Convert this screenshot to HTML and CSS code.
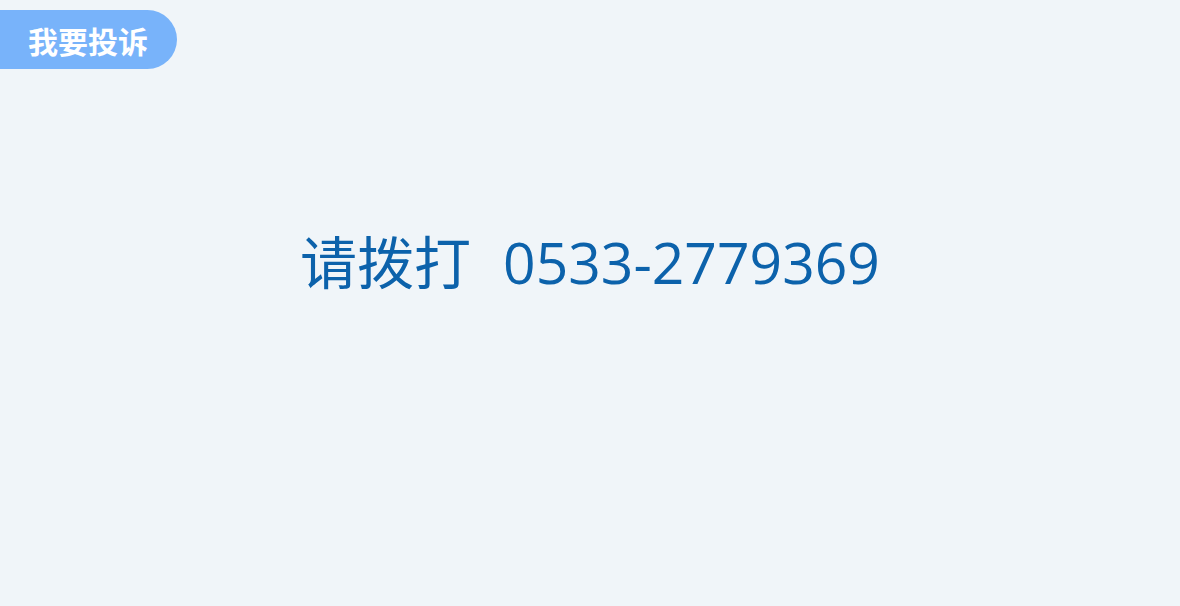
FILE: index.html
```html
<!DOCTYPE html>
<html lang="zh-CN">
<head>
<meta charset="utf-8">
<link rel="stylesheet" href="styles.css">
</head>
<body>
<div class="page">
  <div class="badge">我要投诉</div>
  <div class="main">
    <p class="call"><span class="label">请拨打</span><span class="number">0533-2779369</span></p>
  </div>
</div>
</body>
</html>
```

FILE: styles.css
```css
html, body {
  margin: 0;
  padding: 0;
  background: #f0f5f9;
}
.page {
  width: 1180px;
  height: 606px;
  display: flex;
  flex-direction: column;
  font-family: "Noto Sans CJK SC", "Noto Sans", sans-serif;
}
.badge {
  margin-top: 10px;
  align-self: flex-start;
  height: 59px;
  box-sizing: border-box;
  padding: 0 29px 0 28px;
  display: flex;
  align-items: center;
  background: #78b3fa;
  color: #ffffff;
  font-size: 30px;
  font-weight: 700;
  border-radius: 0 30px 30px 0;
}
.main {
  height: 384px;
  display: flex;
  align-items: center;
  justify-content: center;
}
.call {
  margin: 0;
  display: flex;
  align-items: baseline;
  gap: 32px;
  font-size: 57px;
  color: #0c62ab;
  line-height: 1;
}
.number {
  font-family: "Open Sans", "Noto Sans CJK SC", sans-serif;
}
```
